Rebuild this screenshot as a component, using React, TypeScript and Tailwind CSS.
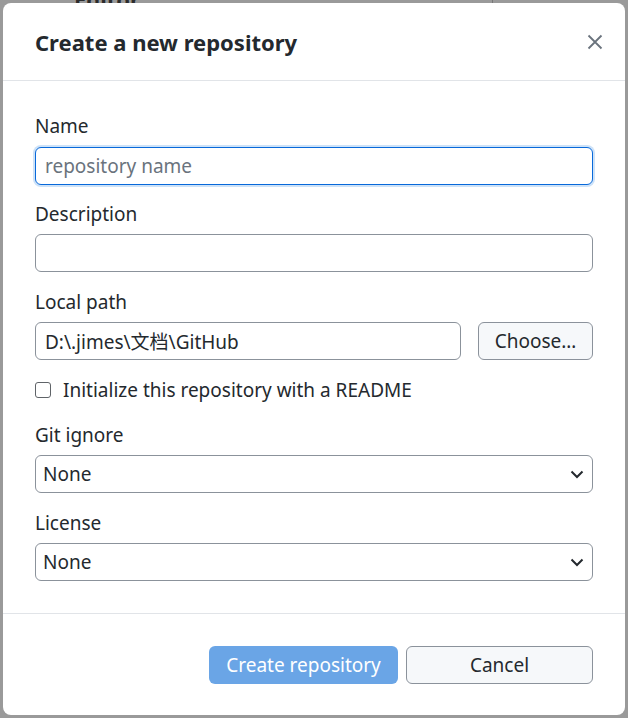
import { useState } from "react";

const FONT = { fontFamily: '"Noto Sans", "Noto Sans CJK SC", sans-serif' };

function Label({ children }: { children: React.ReactNode }) {
  return <div className="text-[19px] leading-[22px] text-[#24292e]">{children}</div>;
}

function Chevron() {
  return (
    <svg width="14" height="9" viewBox="0 0 14 9" className="text-[#24292e]">
      <path d="M1.5 1.5 L7 7 L12.5 1.5" fill="none" stroke="currentColor" strokeWidth="2" />
    </svg>
  );
}

function SelectBox({ value }: { value: string }) {
  return (
    <div className="flex h-[38px] items-center justify-between rounded-[6px] border border-[#8b929b] bg-white pl-[7px] pr-[8px]">
      <span className="text-[19px] leading-[22px] text-[#24292e]">{value}</span>
      <Chevron />
    </div>
  );
}

export default function App() {
  const [readme, setReadme] = useState(false);

  return (
    <div className="relative h-[718px] w-[628px] overflow-hidden bg-[#9a9a9a] p-[3px]" style={FONT}>
      {/* window behind the overlay */}
      <div className="absolute left-[74px] top-[-17px] text-[22px] font-bold text-[#2b2b2b]">Editor</div>
      <div className="absolute left-[492px] top-0 h-[4px] w-px bg-[#777]" />

      <div className="relative flex h-[712px] flex-col rounded-[8px] bg-white">
        <div className="flex h-[78px] items-center justify-between border-b border-[#e1e4e8] pl-[32px] pr-[22px]">
          <h1 className="text-[22px] font-bold leading-[28px] text-[#24292e]">Create a new repository</h1>
          <svg width="16" height="16" viewBox="0 0 16 16" className="text-[#6a737d]">
            <path d="M1.5 1.5 L14.5 14.5 M14.5 1.5 L1.5 14.5" stroke="currentColor" strokeWidth="1.8" />
          </svg>
        </div>

        <div className="flex flex-col px-[32px] pt-[34px]">
          <Label>Name</Label>
          <input
            placeholder="repository name"
            className="mt-[10px] h-[38px] rounded-[6px] border border-[#0969da] bg-white px-[9px] text-[19px] text-[#24292e] shadow-[0_0_0_2px_#cde2f8] outline-none placeholder:text-[#6a737d]"
          />

          <div className="mt-[18px]">
            <Label>Description</Label>
          </div>
          <input className="mt-[9px] h-[38px] rounded-[6px] border border-[#8b929b] bg-white px-[9px] text-[19px] outline-none" />

          <div className="mt-[19px]">
            <Label>Local path</Label>
          </div>
          <div className="mt-[9px] flex gap-[17px]">
            <input
              defaultValue="D:\.jimes\文档\GitHub"
              className="h-[38px] flex-1 rounded-[6px] border border-[#8b929b] bg-white px-[9px] text-[19px] text-[#24292e] outline-none"
            />
            <button className="h-[38px] w-[115px] rounded-[6px] border border-[#8b929b] bg-[#f6f8fa] text-[19px] text-[#24292e]">
              Choose…
            </button>
          </div>

          <label className="mt-[19px] flex items-center gap-[12px]">
            <input
              type="checkbox"
              checked={readme}
              onChange={(e) => setReadme(e.target.checked)}
              className="h-[16px] w-[16px] appearance-none rounded-[3px] border border-[#5f6368] bg-white"
            />
            <span className="text-[19px] leading-[22px] text-[#24292e]">Initialize this repository with a README</span>
          </label>

          <div className="mt-[23px]">
            <Label>Git ignore</Label>
          </div>
          <div className="mt-[9px]">
            <SelectBox value="None" />
          </div>

          <div className="mt-[19px]">
            <Label>License</Label>
          </div>
          <div className="mt-[9px]">
            <SelectBox value="None" />
          </div>
        </div>

        <div className="mt-[32px] border-t border-[#e1e4e8]" />

        <div className="flex justify-end gap-[8px] px-[32px] pt-[32px]">
          <button className="h-[38px] w-[189px] rounded-[6px] bg-[#6aa5e6] text-[19px] text-white">
            Create repository
          </button>
          <button className="h-[38px] w-[187px] rounded-[6px] border border-[#8b929b] bg-[#f6f8fa] text-[19px] text-[#24292e]">
            Cancel
          </button>
        </div>
      </div>
    </div>
  );
}
